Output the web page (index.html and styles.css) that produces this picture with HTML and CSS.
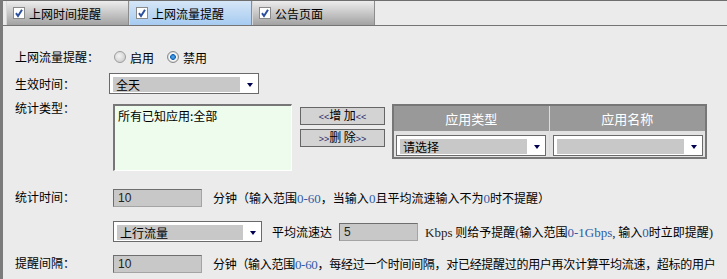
FILE: index.html
```html
<!DOCTYPE html>
<html lang="zh-CN">
<head>
  <meta charset="UTF-8">
  <title>上网流量提醒</title>
  <link rel="stylesheet" href="styles.css">
</head>
<body>

<div class="frame">
  <div class="tabs">
    <div class="tab">
      <svg class="chk" width="12" height="12" viewBox="0 0 12 12"><rect x="0.5" y="0.5" width="11" height="11" fill="#fff" stroke="#8a8a8a"/><path d="M3 6.2 L5 9 L9 2.8" fill="none" stroke="#2c4f9e" stroke-width="2"/></svg>
      上网时间提醒
    </div>
    <div class="tab active">
      <svg class="chk" width="12" height="12" viewBox="0 0 12 12"><rect x="0.5" y="0.5" width="11" height="11" fill="#fff" stroke="#8a8a8a"/><path d="M3 6.2 L5 9 L9 2.8" fill="none" stroke="#2c4f9e" stroke-width="2"/></svg>
      上网流量提醒
    </div>
    <div class="tab">
      <svg class="chk" width="12" height="12" viewBox="0 0 12 12"><rect x="0.5" y="0.5" width="11" height="11" fill="#fff" stroke="#8a8a8a"/><path d="M3 6.2 L5 9 L9 2.8" fill="none" stroke="#2c4f9e" stroke-width="2"/></svg>
      公告页面
    </div>
  </div>

  <div class="content">
    <div class="row row-switch">
      <span class="lbl">上网流量提醒：</span>
      <span class="radio"></span><span class="opt">启用</span>
      <span class="radio on"></span><span class="opt">禁用</span>
    </div>

    <div class="row row-period">
      <span class="lbl short">生效时间：</span>
      <div class="sel"><span class="val">全天</span><span class="arrow"></span></div>
    </div>

    <div class="row row-type">
      <span class="lbl top">统计类型：</span>
      <div class="list">所有已知应用:全部</div>
      <div class="btns">
        <button class="btn"><small>&lt;&lt;</small>增 加<small>&lt;&lt;</small></button>
        <button class="btn"><small>&gt;&gt;</small>删 除<small>&gt;&gt;</small></button>
      </div>
      <table class="apps">
        <thead>
          <tr><th>应用类型</th><th>应用名称</th></tr>
        </thead>
        <tbody>
          <tr>
            <td><div class="sel"><span class="val">请选择</span><span class="arrow"></span></div></td>
            <td><div class="sel"><span class="val"></span><span class="arrow"></span></div></td>
          </tr>
        </tbody>
      </table>
    </div>

    <div class="row row-stat">
      <span class="lbl">统计时间：</span>
      <div class="txt">10</div>
      <span class="note">分钟（输入范围<span class="n">0-60</span>，当输入<span class="n">0</span>且平均流速输入不为<span class="n">0</span>时不提醒）</span>
    </div>

    <div class="row row-rate">
      <span class="lbl"></span>
      <div class="sel"><span class="val">上行流量</span><span class="arrow"></span></div>
      <span class="mid">平均流速达</span>
      <div class="txt small">5</div>
      <span class="unit"><span class="lat">Kbps</span> 则给予提醒<span class="lat">(</span>输入范围<span class="n">0-1Gbps</span><span class="lat">,</span> 输入<span class="n">0</span>时立即提醒<span class="lat">)</span></span>
    </div>

    <div class="row row-gap">
      <span class="lbl">提醒间隔：</span>
      <div class="txt">10</div>
      <span class="note tight">分钟（输入范围<span class="n">0-60</span>，每经过一个时间间隔，对已经提醒过的用户再次计算平均流速，超标的用户</span>
    </div>
  </div>
</div>

</body>
</html>
```

FILE: styles.css
```css
body {
  margin: 0;
  background: #ebebeb;
  font-family: "Noto Sans CJK SC", sans-serif;
  font-size: 12px;
  color: #000;
  overflow: hidden;
}

.frame {
  border-left: 3px solid #7b7b7b;
  height: 279px;
  box-sizing: border-box;
  overflow: hidden;
}

/* tabs */
.tabs {
  display: flex;
  height: 26px;
  box-sizing: border-box;
  border-top: 1px solid #6e6e6e;
  border-bottom: 1px solid #747474;
  padding-left: 3px;
}

.tab {
  width: 123px;
  display: flex;
  align-items: center;
  gap: 4px;
  padding-left: 6px;
  box-sizing: border-box;
  background: linear-gradient(#ededed, #a2a2a2);
  border-right: 1px solid #8c8c8c;
  border-left: 1px solid #d8d8d8;
  font-size: 12px;
}

.tab.active {
  background: linear-gradient(#d6e6f7, #a6cbf1);
}

.chk {
  flex: none;
}

/* form */
.content {
  padding-left: 12px;
}

.row {
  display: flex;
  align-items: center;
  white-space: nowrap;
}

.row > * {
  flex: none;
}

.lbl {
  width: 98px;
  line-height: 16px;
}

.lbl.short {
  width: 94px;
}

.lbl.top {
  margin-top: -4px;
}

.row-switch {
  margin-top: 21px;
  height: 20px;
}

.radio {
  width: 12px;
  height: 12px;
  border-radius: 50%;
  box-sizing: border-box;
  border: 1px solid #9c9c9c;
  background: radial-gradient(circle at 40% 40%, #f4f4f4, #c4c4c4);
  margin-left: 1px;
  margin-right: 4px;
}

.radio.on {
  margin-left: 13px;
  background: radial-gradient(circle, #5fb2f0 0, #1565b8 2.6px, #fff 3.2px, #d8d8d8 5px);
  border-color: #8a8a8a;
}

.row-period {
  margin-top: 6px;
}

/* select box */
.sel {
  display: flex;
  align-items: center;
  width: 150px;
  height: 21px;
  box-sizing: border-box;
  border: 1px solid #6a6a6a;
  background: #fff;
  padding: 3px 0 2px 3px;
}

.sel .val {
  flex: 1;
  height: 15px;
  line-height: 15px;
  background: #c8c8c8;
  padding-left: 3px;
}

.sel .arrow {
  width: 0;
  height: 0;
  border-left: 3.5px solid transparent;
  border-right: 3.5px solid transparent;
  border-top: 4px solid #000050;
  margin: 1px 5px 0 7px;
}

.row-type {
  margin-top: 10px;
  align-items: flex-start;
}

.list {
  width: 179px;
  height: 67px;
  box-sizing: border-box;
  background: #edfced;
  border-top: 2px solid #777;
  border-left: 2px solid #777;
  border-right: 1px solid #fff;
  border-bottom: 1px solid #fff;
  padding: 2px 3px;
  line-height: 16px;
}

.btns {
  display: flex;
  flex-direction: column;
  gap: 4px;
  margin: 3px 0 0 8px;
}

.btn {
  width: 85px;
  height: 18px;
  padding: 0;
  background: #d3d3d3;
  border: 1px solid #666;
  font-family: "Noto Sans CJK SC", sans-serif;
  font-size: 12px;
  line-height: 14px;
  color: #000;
}

.btn small {
  font-size: 9px;
  color: #2a2a6a;
  font-family: "Liberation Sans", sans-serif;
}

.apps {
  margin-left: 7px;
  width: 315px;
  border: 2px solid #777;
  border-spacing: 0;
}

.apps th {
  background: #999;
  color: #fff;
  font-weight: normal;
  font-size: 13px;
  height: 25px;
  padding: 0;
  width: 50%;
}

.apps th:first-child,
.apps td:first-child {
  border-right: 1px solid #dcdcdc;
}

.apps td {
  background: #e2e2e2;
  height: 26px;
  padding: 4px 0 1px 2px;
  box-sizing: border-box;
  vertical-align: top;
}

.apps td + td {
  padding-left: 3px;
}

/* text inputs */
.txt {
  width: 89px;
  height: 18px;
  box-sizing: border-box;
  background: #c8c8c8;
  border: 1px solid;
  border-color: #6e6e6e #a4a4a4 #a4a4a4 #6e6e6e;
  padding-left: 4px;
  line-height: 17px;
  font-family: "Liberation Sans", sans-serif;
  font-size: 12px;
  color: #222;
}

.txt.small {
  width: 79px;
}

.note {
  margin-left: 11px;
}

.note.tight {
  letter-spacing: -0.3px;
}

.n {
  color: #2f5ca6;
  font-family: "Liberation Serif", serif;
  font-size: 13px;
}

.lat {
  font-family: "Liberation Serif", serif;
  font-size: 13px;
  color: #2a2016;
}

.row-stat {
  margin-top: 18px;
}

.row-stat .lbl,
.row-gap .lbl {
  margin-top: -2px;
}

.row-rate {
  margin-top: 14px;
}

.row-rate .sel {
  width: 149px;
}

.mid {
  margin: 0 7px 0 10px;
}

.unit {
  margin-left: 7px;
}

.row-gap {
  margin-top: 13px;
}
```
